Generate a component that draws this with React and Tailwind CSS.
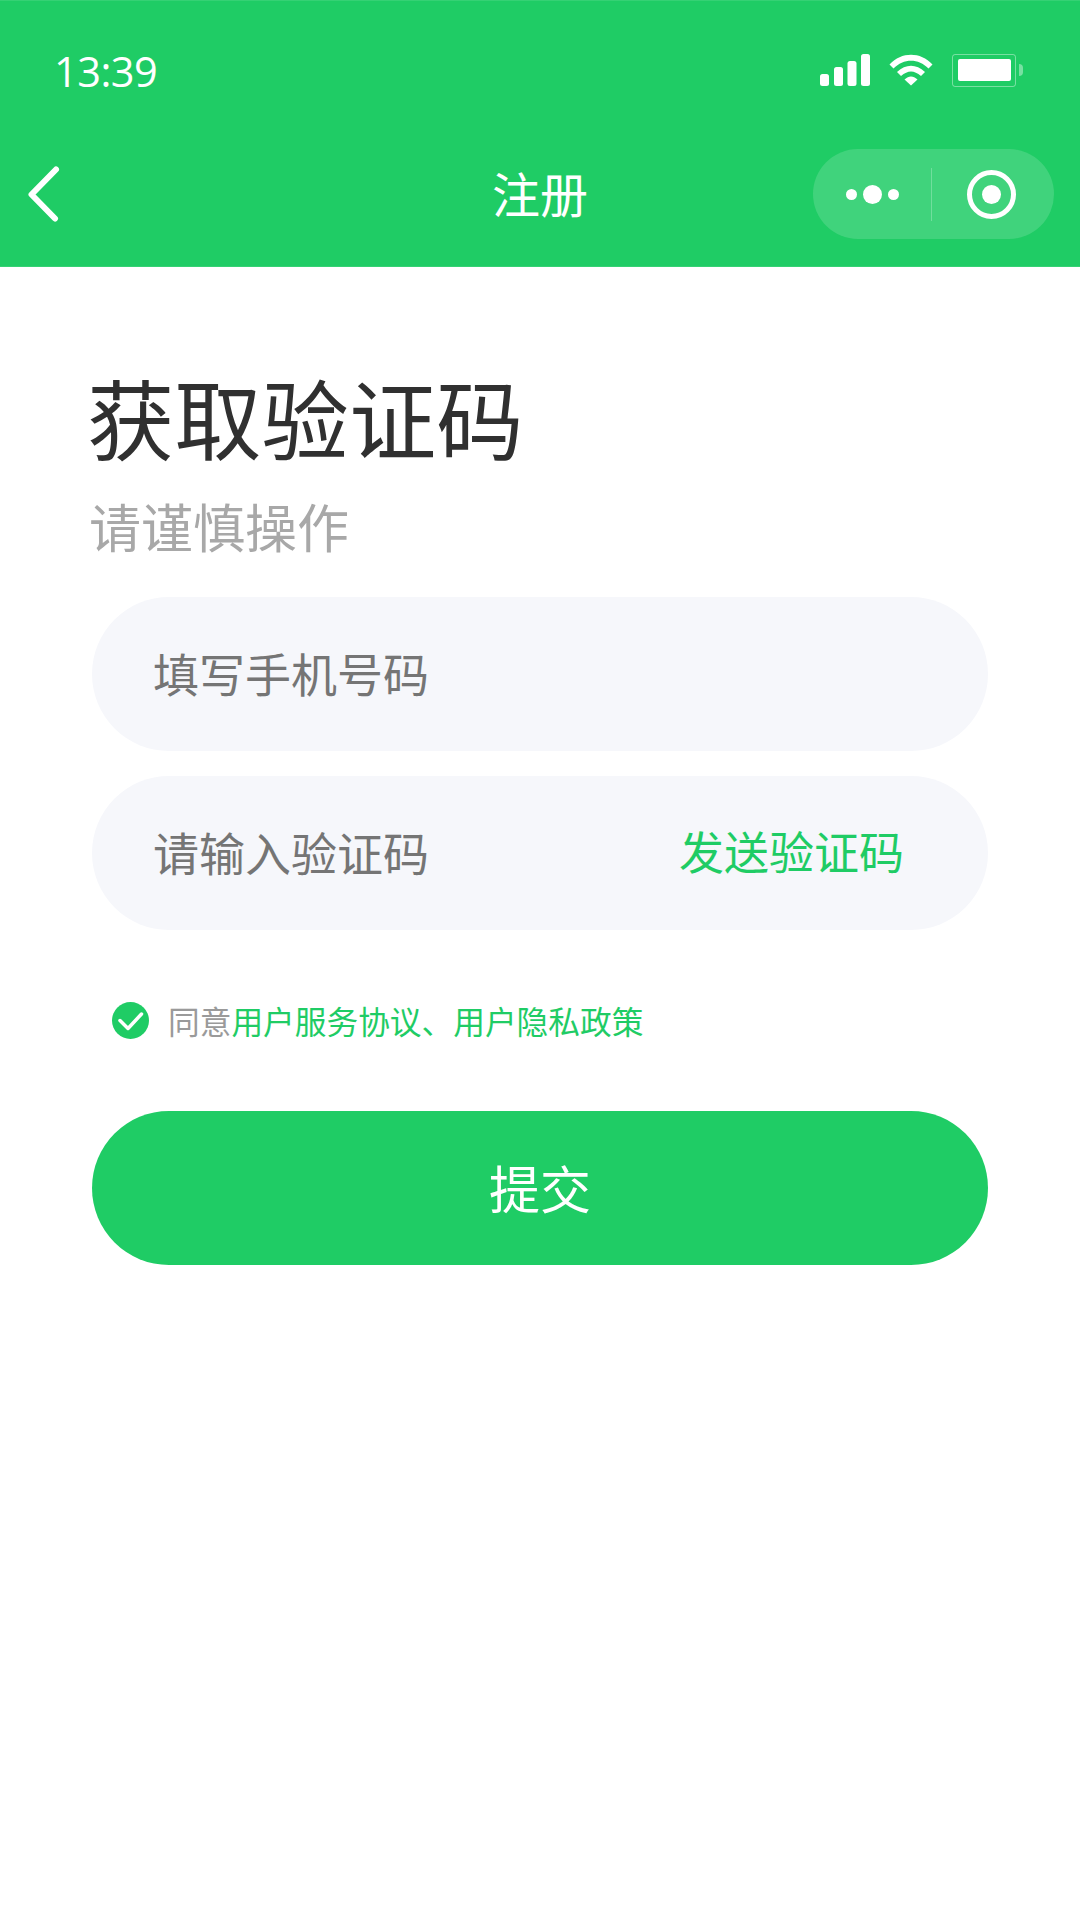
const cjk = "font-['Noto_Sans_CJK_SC',sans-serif]";

function SignalIcon() {
    return (
        <svg width="50" height="32" viewBox="0 0 50 32" fill="white">
            <rect x="0" y="20" width="9" height="12" rx="2.5" />
            <rect x="14" y="13" width="9" height="19" rx="2.5" />
            <rect x="27.500" y="7" width="9" height="25" rx="2.5" />
            <rect x="41" y="0" width="9" height="32" rx="2.5" />
        </svg>
    );
}

function WifiIcon() {
    return (
        <svg width="44" height="32" viewBox="0 0 44 32" fill="white">
            <path d="M0.500 10.500C12.500 -2.500 31.500 -2.500 43.500 10.500L39.500 14.500C29.500 4 14.500 4 4.500 14.500Z" />
            <path d="M8 18C17 9.500 27 9.500 36 18L32 22C25 16 19 16 12 22Z" />
            <path d="M15.500 25.500C20 21.500 24 21.500 28.500 25.500L22 31.500Z" />
        </svg>
    );
}

function BatteryIcon() {
    return (
        <div className="flex items-center">
            <div className="flex h-[33px] w-[64px] items-center justify-center rounded-[3px] border-[1.5px] border-white/40">
                <div className="h-[22px] w-[53px] rounded-[2px] bg-white" />
            </div>
            <div className="ml-[3px] h-[12px] w-[4px] rounded-r-full bg-white/40" />
        </div>
    );
}

function BackIcon() {
    return (
        <svg width="32" height="56" viewBox="0 0 32 56" fill="none" stroke="white" strokeWidth="6" strokeLinecap="round" strokeLinejoin="round">
            <path d="M28 3.500L3.500 28.500L27 52.500" />
        </svg>
    );
}

function CapsuleMenu() {
    return (
        <div className="flex h-[90px] w-[241px] items-center rounded-full bg-white/15">
            <div className="flex flex-1 items-center justify-center gap-[6px]">
                <div className="size-[11px] rounded-full bg-white" />
                <div className="size-[19px] rounded-full bg-white" />
                <div className="size-[11px] rounded-full bg-white" />
            </div>
            <div className="h-[53px] w-px bg-white/25" />
            <div className="flex w-[122px] items-center justify-center pr-[3px]">
                <div className="flex size-[49px] items-center justify-center rounded-full border-[5px] border-white">
                    <div className="size-[19px] rounded-full bg-white" />
                </div>
            </div>
        </div>
    );
}

function CheckIcon() {
    return (
        <svg width="37" height="37" viewBox="0 0 37 37">
            <circle cx="18.500" cy="18.500" r="18.500" fill="#1fcc65" />
            <path d="M8 18.500L16 26.500L29.500 12" fill="none" stroke="white" strokeWidth="3.5" strokeLinecap="round" strokeLinejoin="round" />
        </svg>
    );
}

export default function App() {
    return (
        <div className={`${cjk} flex min-h-[1920px] w-[1080px] flex-col bg-white`}>
            <header className="h-[267px] border-y border-[#35d174] bg-[#1fcc65] text-white">
                <div className="flex h-[148px] items-center justify-between pr-[55px] pb-[10px] pl-[54px]">
                    <span className="translate-y-[2px] font-['Open_Sans',sans-serif] text-[41.500px] leading-none tracking-[-0.5px]">13:39</span>
                    <div className="flex items-center gap-[19px] pr-[2px]">
                        <SignalIcon />
                        <WifiIcon />
                        <BatteryIcon />
                    </div>
                </div>
                <div className="relative flex h-[90px] items-center justify-between pr-[26px] pl-[28px]">
                    <BackIcon />
                    <h1 className="absolute inset-x-0 -translate-y-[2px] text-center text-[48px] leading-none font-normal">注册</h1>
                    <div className="relative">
                        <CapsuleMenu />
                    </div>
                </div>
            </header>

            <main className="flex flex-col px-[92px] pt-[97px]">
                <h2 className="-ml-[5px] text-[87.300px] leading-[104px] font-normal text-[#303030]">获取验证码</h2>
                <p className="mt-[26px] -ml-[3px] text-[52px] leading-[64px] font-normal text-[#a8a8a8]">请谨慎操作</p>

                <div className="mt-[39px] flex h-[154px] items-center rounded-full bg-[#f6f7fb] px-[62px] pb-[4px]">
                    <span className="-ml-[1px] text-[46px] font-normal text-[#757575]">填写手机号码</span>
                </div>
                <div className="mt-[25px] flex h-[154px] items-center justify-between rounded-full bg-[#f6f7fb] pr-[84px] pb-[4px] pl-[62px]">
                    <span className="-ml-[1px] text-[46px] font-normal text-[#757575]">请输入验证码</span>
                    <span className="text-[45px] font-normal text-[#1fcc65]">发送验证码</span>
                </div>

                <div className="mt-[67px] flex items-center pl-[20px]">
                    <CheckIcon />
                    <p className="ml-[19px] text-[31.700px] font-normal text-[#1fcc65]">
                        <span className="text-[#9a9a9a]">同意</span>用户服务协议、用户隐私政策
                    </p>
                </div>

                <button className="mt-[66px] flex h-[154px] items-center justify-center rounded-full bg-[#1fcc65] text-[51px] font-normal text-white">
                    提交
                </button>
            </main>
        </div>
    );
}
